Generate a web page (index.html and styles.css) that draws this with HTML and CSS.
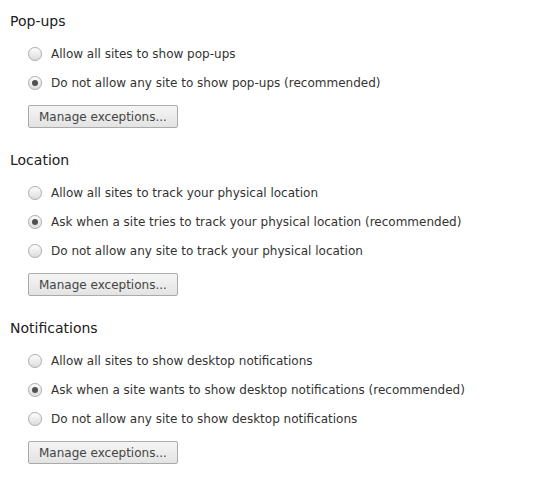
FILE: index.html
```html
<!DOCTYPE html>
<html lang="en">
<head>
  <meta charset="UTF-8">
  <title>Content settings</title>
  <link rel="stylesheet" href="styles.css">
</head>
<body>
  <!-- Pop-ups -->
  <section class="group">
    <h3>Pop-ups</h3>
    <div class="options">
      <label class="option"><input type="radio" name="popups"> Allow all sites to show pop-ups</label>
      <label class="option"><input type="radio" name="popups" checked> Do not allow any site to show pop-ups (recommended)</label>
    </div>
    <button type="button">Manage exceptions...</button>
  </section>

  <!-- Location -->
  <section class="group">
    <h3>Location</h3>
    <div class="options">
      <label class="option"><input type="radio" name="location"> Allow all sites to track your physical location</label>
      <label class="option"><input type="radio" name="location" checked> Ask when a site tries to track your physical location (recommended)</label>
      <label class="option"><input type="radio" name="location"> Do not allow any site to track your physical location</label>
    </div>
    <button type="button">Manage exceptions...</button>
  </section>

  <!-- Notifications -->
  <section class="group">
    <h3>Notifications</h3>
    <div class="options">
      <label class="option"><input type="radio" name="notifications"> Allow all sites to show desktop notifications</label>
      <label class="option"><input type="radio" name="notifications" checked> Ask when a site wants to show desktop notifications (recommended)</label>
      <label class="option"><input type="radio" name="notifications"> Do not allow any site to show desktop notifications</label>
    </div>
    <button type="button">Manage exceptions...</button>
  </section>
</body>
</html>
```

FILE: styles.css
```css
body {
  font-family: "DejaVu Sans", sans-serif;
  margin: 0;
  padding: 11px 10px 0;
  background: #ffffff;
  color: #333333;
}

.group {
  margin-bottom: 22px;
}

h3 {
  font-size: 14px;
  font-weight: normal;
  line-height: 20px;
  margin: 0;
  color: #202020;
}

.options {
  margin: 8px 0 8px 18px;
}

.option {
  display: flex;
  align-items: center;
  height: 29px;
  font-size: 12px;
  color: #333333;
}

.option input {
  -webkit-appearance: none;
  appearance: none;
  width: 14px;
  height: 14px;
  margin: 0 9px 0 0;
  border: 1px solid #b0b0b0;
  border-radius: 50%;
  background: linear-gradient(to bottom, #fdfdfd, #dcdcdc);
  box-shadow: 0 0 1px rgba(0, 0, 0, 0.15);
  position: relative;
  flex-shrink: 0;
}

.option input:checked::after {
  content: "";
  position: absolute;
  left: 3px;
  top: 3px;
  width: 6px;
  height: 6px;
  border-radius: 50%;
  background: #505050;
}

button {
  margin-left: 18px;
  height: 23px;
  padding: 0 10px;
  font-family: "DejaVu Sans", sans-serif;
  font-size: 12px;
  color: #444444;
  border: 1px solid #aaaaaa;
  border-radius: 2px;
  background: linear-gradient(to bottom, #f5f5f5, #e3e3e3);
}
```
